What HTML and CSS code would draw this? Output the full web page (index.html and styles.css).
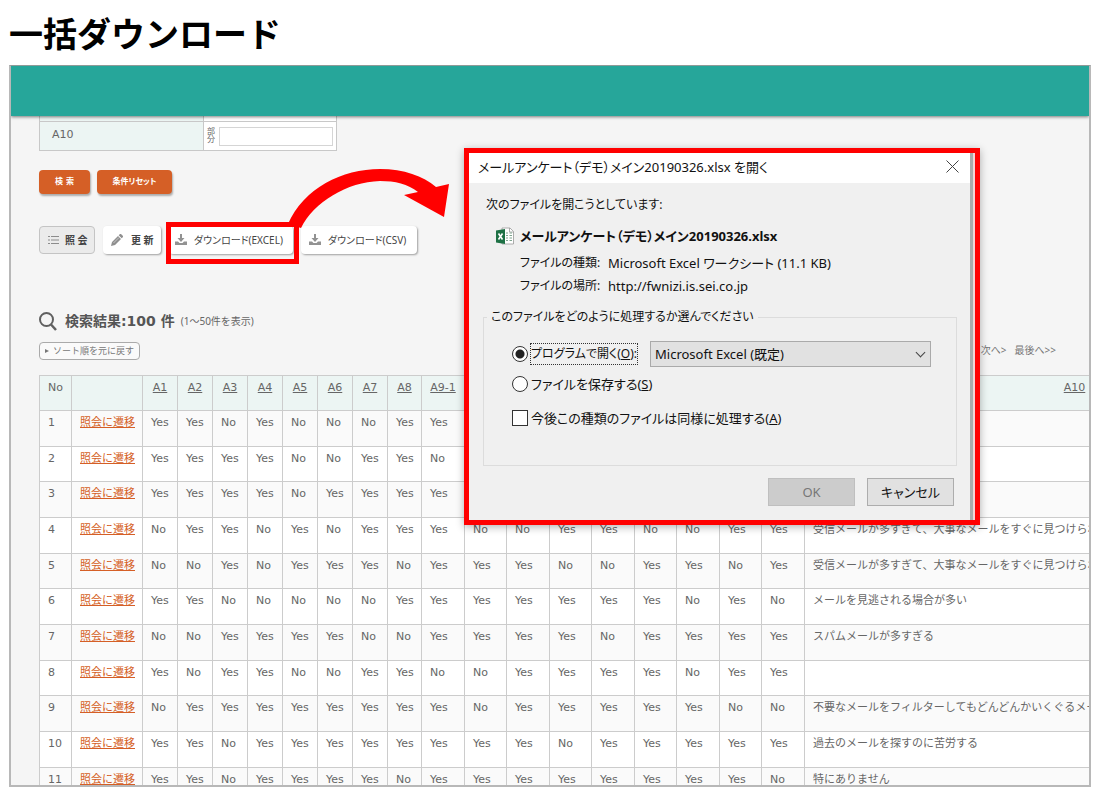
FILE: index.html
```html
<!DOCTYPE html>
<html lang="ja">
<head>
<meta charset="utf-8">
<title>一括ダウンロード</title>
<link rel="stylesheet" href="styles.css">
</head>
<body>
<h1 class="page-title">一括ダウンロード</h1>
<main class="frame">
  <header class="app-bar"></header>
  <div class="content">
    <div class="criteria">
      <div class="criteria-row criteria-row-cut"><div class="criteria-name"></div><div class="criteria-value"></div></div>
      <div class="criteria-row">
        <label class="criteria-name" for="a10">A10</label>
        <div class="criteria-value"><span class="match">部分</span><input id="a10" class="criteria-input" type="text"></div>
      </div>
    </div>
    <div class="search-actions">
      <button class="btn-orange btn-search" type="button">検 索</button>
      <button class="btn-orange btn-reset" type="button">条件リセット</button>
    </div>
    <div class="toolbar">
      <button class="tool tool-view" type="button">
        <svg width="11" height="10" viewBox="0 0 11 10" fill="none" stroke="#8c8c8c"><path d="M0 1.500h2M3 1.500h8M0 5h2M3 5h8M0 8.500h2M3 8.500h8"/></svg>照 会</button>
      <button class="tool tool-edit" type="button">
        <svg width="12" height="12" viewBox="0 0 12 12" fill="#8f8f8f"><path d="M0 12l1-4 6-6 3 3-6 6zM7.700 1.300L9 0h1l2 2v1l-1.300 1.300z"/><path d="M2.500 9L8 3.500" stroke="#ddd" stroke-width=".7"/></svg>更 新</button>
      <button class="tool tool-excel" type="button">
        <svg width="12" height="12" viewBox="0 0 12 12" fill="#929292"><path d="M5 0h2v4h2.500L6 8 2.500 4H5z"/><path d="M0 7.500h3L4.500 9h3L9 7.500h3V11H0z"/></svg>ダウンロード(EXCEL)</button>
      <button class="tool tool-csv" type="button">
        <svg width="12" height="12" viewBox="0 0 12 12" fill="#929292"><path d="M5 0h2v4h2.500L6 8 2.500 4H5z"/><path d="M0 7.500h3L4.500 9h3L9 7.500h3V11H0z"/></svg>ダウンロード(CSV)</button>
    </div>
    <div class="result-head">
      <svg width="18" height="19" viewBox="0 0 18 19" fill="none" stroke="#606060" stroke-width="2"><circle cx="7.500" cy="7.500" r="6.500"/><path d="M12 12.500l5 5.500" stroke-width="2.500"/></svg>
      <h2 class="result-title">検索結果:100 件</h2>
      <span class="result-range">(1～50件を表示)</span>
    </div>
    <div class="list-tools">
      <button class="btn-sort" type="button"><svg width="4" height="6" viewBox="0 0 4 6" fill="#777"><path d="M0 1l4 2-4 2z"/></svg>ソート順を元に戻す</button>
      <nav class="pager"><a href="#next">次へ&gt;</a><a href="#last">最後へ&gt;&gt;</a></nav>
    </div>
    <table class="results">
      <colgroup><col class="c-no"><col class="c-link"><col class="c-a" span="7"><col class="c-a-last"><col class="c-b"><col class="c-c"><col class="c-b"><col class="c-c"><col class="c-b"><col class="c-c"><col class="c-b"><col class="c-c"><col class="c-b"><col class="c-text"></colgroup>
      <thead>
        <tr><th>No</th><th></th><th><a href="#a1">A1</a></th><th><a href="#a2">A2</a></th><th><a href="#a3">A3</a></th><th><a href="#a4">A4</a></th><th><a href="#a5">A5</a></th><th><a href="#a6">A6</a></th><th><a href="#a7">A7</a></th><th><a href="#a8">A8</a></th><th><a href="#a9-1">A9-1</a></th><th></th><th></th><th></th><th></th><th></th><th></th><th></th><th></th><th><a href="#a10c">A10</a></th></tr>
      </thead>
      <tbody>
        <tr><td>1<td><a href="#1">照会に遷移</a><td>Yes<td>Yes<td>No<td>Yes<td>No<td>No<td>No<td>Yes<td>Yes<td><td><td><td><td><td><td><td><td></tr>
        <tr><td>2<td><a href="#2">照会に遷移</a><td>Yes<td>Yes<td>Yes<td>Yes<td>No<td>No<td>Yes<td>Yes<td>No<td><td><td><td><td><td><td><td><td></tr>
        <tr><td>3<td><a href="#3">照会に遷移</a><td>Yes<td>Yes<td>Yes<td>Yes<td>No<td>Yes<td>Yes<td>Yes<td>Yes<td><td><td><td><td><td><td><td><td></tr>
        <tr><td>4<td><a href="#4">照会に遷移</a><td>No<td>Yes<td>Yes<td>No<td>Yes<td>No<td>Yes<td>Yes<td>Yes<td>No<td>No<td>Yes<td>Yes<td>No<td>No<td>Yes<td>Yes<td>受信メールが多すぎて、大事なメールをすぐに見つけられ</tr>
        <tr><td>5<td><a href="#5">照会に遷移</a><td>No<td>No<td>Yes<td>No<td>Yes<td>Yes<td>Yes<td>No<td>Yes<td>Yes<td>Yes<td>No<td>No<td>Yes<td>Yes<td>No<td>Yes<td>受信メールが多すぎて、大事なメールをすぐに見つけられ</tr>
        <tr><td>6<td><a href="#6">照会に遷移</a><td>Yes<td>Yes<td>No<td>No<td>No<td>No<td>No<td>Yes<td>Yes<td>Yes<td>Yes<td>Yes<td>Yes<td>Yes<td>No<td>Yes<td>No<td>メールを見逃される場合が多い</tr>
        <tr><td>7<td><a href="#7">照会に遷移</a><td>No<td>No<td>Yes<td>Yes<td>Yes<td>Yes<td>No<td>No<td>Yes<td>Yes<td>Yes<td>Yes<td>No<td>Yes<td>Yes<td>Yes<td>Yes<td>スパムメールが多すぎる</tr>
        <tr><td>8<td><a href="#8">照会に遷移</a><td>Yes<td>No<td>Yes<td>Yes<td>No<td>No<td>Yes<td>Yes<td>No<td>No<td>Yes<td>Yes<td>Yes<td>Yes<td>No<td>Yes<td>Yes<td></tr>
        <tr><td>9<td><a href="#9">照会に遷移</a><td>No<td>Yes<td>Yes<td>Yes<td>Yes<td>Yes<td>Yes<td>Yes<td>Yes<td>No<td>Yes<td>Yes<td>Yes<td>Yes<td>Yes<td>No<td>No<td>不要なメールをフィルターしてもどんどんかいくぐるメー</tr>
        <tr><td>10<td><a href="#10">照会に遷移</a><td>Yes<td>Yes<td>No<td>Yes<td>Yes<td>Yes<td>Yes<td>Yes<td>Yes<td>Yes<td>Yes<td>No<td>Yes<td>Yes<td>Yes<td>Yes<td>Yes<td>過去のメールを探すのに苦労する</tr>
        <tr><td>11<td><a href="#11">照会に遷移</a><td>Yes<td>Yes<td>No<td>Yes<td>Yes<td>Yes<td>Yes<td>No<td>Yes<td>Yes<td>Yes<td>Yes<td>Yes<td>Yes<td>Yes<td>Yes<td>No<td>特にありません</tr>
      </tbody>
    </table>
  </div>

  <svg class="arrow" width="170" height="64" viewBox="284 164 170 64" fill="#f00"><path d="M288 224C304 188 342 169 380 169C404 169 423 176 436 187L449 184L444 217L404 195L418 192C408 184 395 181 380 181C347 182 314 202 301 228z"/></svg>

  <section class="dialog" role="dialog" aria-labelledby="dlg-title">
    <div class="dialog-window">
      <div class="dialog-bar">
        <span id="dlg-title">メールアンケート（デモ）メイン20190326.xlsx を開く</span>
        <button class="close" type="button" aria-label="閉じる"><svg width="13" height="13" viewBox="0 0 13 13" fill="none" stroke="#444"><path d="M.5.5l12 12M12.500.5l-12 12"/></svg></button>
      </div>
      <div class="dialog-body">
        <p class="lead">次のファイルを開こうとしています:</p>
        <div class="file">
          <svg width="18" height="18" viewBox="0 0 18 18"><path d="M6 1h8l3.500 3.500v12.500H6z" fill="#fff" stroke="#999" stroke-width=".8"/><path d="M13.500 1v4h4" fill="none" stroke="#999" stroke-width=".8"/><path d="M10 6h2M13.500 6h2.500M10 8.500h2M13.500 8.500h2.500M10 11h2M13.500 11h2.500M10 13.500h2M13.500 13.500h2.500" stroke="#7fa58f"/><path d="M0 3.500l9-1.500v15l-9-1.500z" fill="#1e7145"/><path d="M2.500 6.500l4 6M6.500 6.500l-4 6" stroke="#fff" stroke-width="1.600"/></svg>
          <strong>メールアンケート（デモ）メイン20190326.xlsx</strong>
        </div>
        <dl class="facts">
          <dt>ファイルの種類:</dt><dd>Microsoft Excel ワークシート (11.1 KB)</dd>
          <dt>ファイルの場所:</dt><dd>http://fwnizi.is.sei.co.jp</dd>
        </dl>
        <fieldset class="choice">
          <legend>このファイルをどのように処理するか選んでください</legend>
          <div class="option option-open">
            <input id="open" class="mark radio" type="radio" name="how" checked><label class="focus" for="open">プログラムで開く(<u>O</u>):</label>
            <select class="program" aria-label="プログラム"><option>Microsoft Excel (既定)</option></select>
          </div>
          <div class="option option-save">
            <input id="save" class="mark radio" type="radio" name="how"><label for="save">ファイルを保存する(<u>S</u>)</label>
          </div>
          <div class="option option-always">
            <input id="always" class="mark" type="checkbox"><label for="always">今後この種類のファイルは同様に処理する(<u>A</u>)</label>
          </div>
        </fieldset>
        <div class="dialog-actions">
          <button class="dlg-btn" type="button" disabled>OK</button>
          <button class="dlg-btn" type="button">キャンセル</button>
        </div>
      </div>
    </div>
  </section>
</main>
</body>
</html>
```
FILE: styles.css
```css
* { box-sizing: border-box; }

body {
  margin: 0;
  height: 100vh;
  padding: 8px 9px 13px;
  display: flex;
  flex-direction: column;
  background: #fff;
  color: #666;
  font: 11px/16px "DejaVu Sans", "Noto Sans CJK JP", sans-serif;
}

button, input, select { font: inherit; color: inherit; margin: 0; }
button { padding: 0; cursor: pointer; }
svg { flex: none; display: block; }

.page-title {
  margin: 0;
  height: 57px;
  font: bold 34px/50px "Noto Sans CJK JP", sans-serif;
  color: #000;
}

.frame {
  position: relative;
  flex: 1;
  min-height: 0;
  overflow: hidden;
  border: 2px solid #b8b8b8;
  border-top: 1px solid #8f9a98;
  background: #f5f5f5;
}

.app-bar {
  position: relative;
  height: 50px;
  background: #26a69a;
  box-shadow: 0 1px 3px rgba(0, 0, 0, .5);
}

.content { padding-left: 28px; }

/* search criteria */
.criteria { width: 298px; border: 1px solid #c8c8c8; border-top: 0; }
.criteria-row { display: flex; height: 28px; }
.criteria-row-cut { height: 6px; border-bottom: 1px solid #c8c8c8; }
.criteria-name {
  flex: none;
  width: 164px;
  padding: 5px 12px;
  border-right: 1px solid #c8c8c8;
  background: #ecf5f3;
}
.criteria-row-cut .criteria-name { padding: 0; }
.criteria-value {
  flex: 1;
  min-width: 0;
  display: flex;
  align-items: center;
  gap: 3px;
  padding: 0 3px;
  background: #fff;
}
.criteria-row-cut .criteria-value { padding: 0; }
.match { flex: none; width: 9px; font-size: 8px; line-height: 8px; }
.criteria-input { flex: 1; min-width: 0; height: 19px; border: 1px solid #d5d5d5; background: #fff; }

.search-actions { display: flex; gap: 7px; margin-top: 19px; }
.btn-orange {
  height: 24px;
  border: 0;
  border-radius: 4px;
  background: #d55f26;
  box-shadow: 1px 2px 2px rgba(0, 0, 0, .3);
  color: #fff;
  font-size: 8px;
  font-weight: bold;
}
.btn-search { width: 51px; }
.btn-reset { width: 75px; font-feature-settings: "palt"; }

.toolbar { display: flex; gap: 8px; margin-top: 32px; }
.tool {
  position: relative;
  height: 28px;
  display: flex;
  align-items: center;
  border: 0;
  border-radius: 4px;
  background: #fff;
  box-shadow: 1px 1px 2px rgba(0, 0, 0, .35);
  color: #444;
  font-size: 10px;
  font-family: "Noto Sans", "Noto Sans CJK JP", sans-serif;
  font-feature-settings: "palt";
  white-space: nowrap;
}
.tool-view { width: 56px; gap: 6px; padding-left: 8px; border: 1px solid #c4c4c4; background: #ebebeb; box-shadow: none; font-weight: bold; }
.tool-edit { width: 58px; gap: 8px; padding-left: 8px; font-weight: bold; }
.tool-excel { width: 124px; gap: 7px; padding-left: 6px; }
.tool-csv { width: 116px; gap: 7px; padding-left: 8px; }
.tool-excel::after {
  content: "";
  position: absolute;
  inset: -4px -6px -10px -3px;
  border: 5px solid #f00;
}

/* results */
.result-head { display: flex; align-items: center; gap: 6px; margin-top: 56px; height: 22px; }
.result-title { margin: 0 0 0 2px; font-size: 14px; line-height: 22px; color: #555; }
.result-range { font: 10px/22px "Noto Sans", "Noto Sans CJK JP", sans-serif; }

.list-tools { display: flex; justify-content: space-between; align-items: center; height: 18px; margin: 10px 33px 15px 0; }
.btn-sort {
  display: flex;
  align-items: center;
  gap: 4px;
  width: 101px;
  height: 18px;
  padding-left: 5px;
  border: 1px solid #aaa;
  border-radius: 4px;
  background: #fafafa;
  font-size: 9px;
  color: #777;
}
.pager { display: flex; gap: 8px; padding-bottom: 2px; font-size: 10px; font-family: "Noto Sans", "Noto Sans CJK JP", sans-serif; }
.pager a { color: #777; text-decoration: none; }

.results { width: 1304px; table-layout: fixed; border-collapse: collapse; background: #fff; }
.c-no { width: 32px; }
.c-link { width: 71px; }
.c-a { width: 35px; }
.c-a-last { width: 34px; }
.c-b { width: 43px; }
.c-c { width: 42px; }
.c-text { width: 540px; }
.results th, .results td {
  height: 36px;
  padding: 4px 0 0 8px;
  border: 1px solid #ccc;
  vertical-align: top;
  text-align: left;
  white-space: nowrap;
  font-weight: normal;
}
.results th { height: 35px; padding: 4px 0 0; background: #ecf5f3; text-align: center; }
.results th a { color: #666; }
.results td a { color: #d55f26; }
.results tbody tr:nth-child(odd) { background: #fafafa; }
.results tbody tr:nth-child(3n+2) td { height: 35px; }

.arrow { position: absolute; left: 273px; top: 98px; }

/* file dialog */
.dialog {
  position: absolute;
  left: 453px;
  top: 82px;
  width: 516px;
  border: 5px solid #f00;
  background: #f3d4d4;
  box-shadow: 0 2px 8px rgba(0, 0, 0, .3);
  color: #111;
  font: 13px/20px "Noto Sans", "Noto Sans CJK JP", sans-serif;
  font-feature-settings: "palt";
}
.dialog-window { margin-right: 2px; border-right: 3px solid #aaa; background: #f0f0f0; }
.dialog-bar {
  display: flex;
  justify-content: space-between;
  align-items: center;
  height: 30px;
  padding: 0 11px 3px 9px;
  background: #fff;
}
.close { border: 0; background: none; }
.dialog-body { padding: 12px 13px 14px 14px; }
.lead { margin: 0 0 11px 3px; font-size: 12px; }
.file { display: flex; align-items: center; gap: 6px; margin-left: 13px; height: 20px; }
.facts { display: grid; grid-template-columns: 82px 1fr; gap: 3px 6px; margin: 7px 0 11px 37px; }
.facts dt, .facts dd { margin: 0; white-space: nowrap; }
.facts dt { font-size: 12px; }
.choice { margin: 0; padding: 14px 25px 34px 28px; border: 1px solid #dcdcdc; }
.choice legend { margin-left: -25px; padding: 0 4px; font-size: 12px; }
.option { display: flex; align-items: center; height: 26px; }
.option-open { position: relative; }
.option-save { margin-top: 4px; }
.option-always { margin-top: 8px; }
.mark { appearance: none; flex: none; width: 16px; height: 16px; margin-right: 3px; border: 1px solid #333; background: #fff; }
.radio { border-radius: 50%; }
.radio:checked { background: radial-gradient(circle, #222 4px, #fff 5px); }
.focus { outline: 1px dotted #333; font-size: 12px; white-space: nowrap; }
.program {
  appearance: none;
  flex: none;
  width: 281px;
  height: 26px;
  margin-left: auto;
  padding: 0 4px;
  border: 1px solid #aaa;
  border-radius: 0;
  background: #e1e1e1;
}
.option-open::after {
  content: "";
  position: absolute;
  right: 7px;
  top: 8px;
  width: 6px;
  height: 6px;
  border: solid #444;
  border-width: 0 1px 1px 0;
  transform: rotate(45deg);
}
.dialog-actions { display: flex; justify-content: flex-end; gap: 12px; margin: 12px 3px 0 0; }
.dlg-btn { width: 87px; height: 28px; border: 1px solid #adadad; background: #e1e1e1; }
.dlg-btn:disabled { background: #ccc; border-color: #bfbfbf; color: #777; }
```
